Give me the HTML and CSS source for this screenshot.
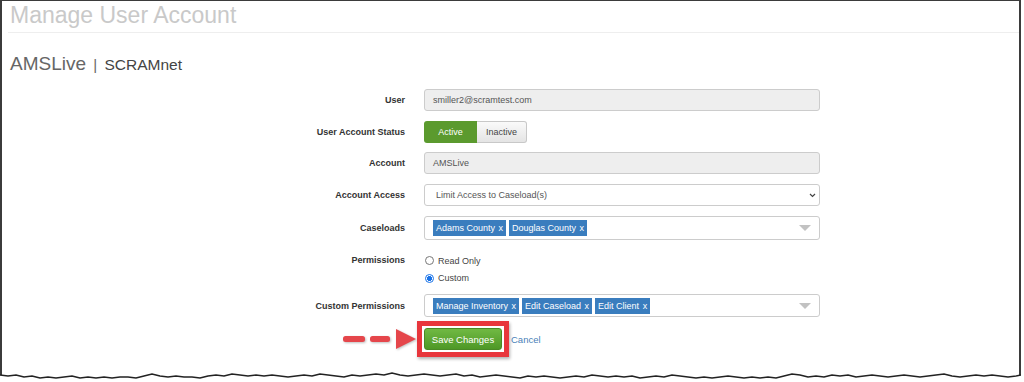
FILE: index.html
```html
<!DOCTYPE html>
<html lang="en">
<head>
  <meta charset="UTF-8" />
  <title>Manage User Account</title>
  <link rel="stylesheet" href="styles.css">
</head>
<body>

  <div class="frame">
    <h1 class="page-title">Manage User Account</h1>
    <h2 class="account-name">AMSLive <span class="sep">|</span> <span class="org">SCRAMnet</span></h2>

    <form class="user-form">
      <div class="field">
        <label>User</label>
        <div class="input readonly">smiller2@scramtest.com</div>
      </div>

      <div class="field status-row">
        <label>User Account Status</label>
        <div class="toggle">
          <span class="toggle-on">Active</span><span class="toggle-off">Inactive</span>
        </div>
      </div>

      <div class="field">
        <label>Account</label>
        <div class="input readonly">AMSLive</div>
      </div>

      <div class="field">
        <label>Account Access</label>
        <div class="input select">
          <span>Limit Access to Caseload(s)</span>
          <svg class="chevron" width="7" height="5" viewBox="0 0 7 5"><polyline points="1,1 3.5,3.5 6,1" fill="none" stroke="#444" stroke-width="1.2"/></svg>
        </div>
      </div>

      <div class="field caseload-row">
        <label>Caseloads</label>
        <div class="input tags">
          <span class="tag">Adams County <b>x</b></span>
          <span class="tag">Douglas County <b>x</b></span>
          <span class="caret"></span>
        </div>
      </div>

      <div class="field perm-row">
        <label>Permissions</label>
        <div class="radio-list">
          <div class="radio"><span class="dot"></span>Read Only</div>
          <div class="radio"><span class="dot checked"></span>Custom</div>
        </div>
      </div>

      <div class="field custom-row">
        <label>Custom Permissions</label>
        <div class="input tags short">
          <span class="tag">Manage Inventory <b>x</b></span>
          <span class="tag">Edit Caseload <b>x</b></span>
          <span class="tag">Edit Client <b>x</b></span>
          <span class="caret"></span>
        </div>
      </div>

      <div class="field actions">
        <div class="pointer">
          <svg width="73" height="22" viewBox="0 0 73 22">
            <rect x="0" y="8" width="22" height="6" rx="2.5" fill="#e5464b"/>
            <rect x="27" y="8" width="20" height="6" rx="2.5" fill="#e5464b"/>
            <polygon points="53,1 73,11 53,21" fill="#e5464b"/>
          </svg>
        </div>
        <div class="buttons">
          <span class="callout"><button type="button" class="save">Save Changes</button></span>
          <a href="#" class="cancel">Cancel</a>
        </div>
      </div>
    </form>

    <svg class="torn" width="1021" height="14" viewBox="0 0 1021 14">
      <polygon fill="#fff" points="0,6 8,7 16,6 24,8 32,7 40,9 48,8 56,9 64,8 72,7 80,9 88,8 96,9 104,8 112,9 120,8 128,8 136,9 144,7 152,5 160,7 168,8 176,7 184,8 192,8 200,9 208,7 216,6 224,7 232,5 240,6 248,7 256,6 264,7 272,6 280,7 288,8 296,7 304,6 312,7 320,5 328,6 336,7 344,8 352,6 360,7 368,6 376,5 384,6 392,4 400,6 408,7 416,6 424,5 432,6 440,7 448,6 456,5 464,7 472,6 480,8 488,7 496,6 504,7 512,8 520,9 528,7 536,8 544,7 552,8 560,9 568,8 576,7 584,8 592,6 600,7 608,8 616,7 624,8 632,7 640,9 648,8 656,7 664,8 672,6 680,7 688,8 696,9 704,8 712,9 720,8 728,7 736,8 744,9 752,8 760,9 768,8 776,9 784,7 792,5 800,6 808,8 816,7 824,8 832,6 840,7 848,6 856,8 864,7 872,6 880,7 888,8 896,7 904,6 912,7 920,8 928,7 936,6 944,5 952,7 960,8 968,7 976,6 984,7 992,6 1000,7 1008,8 1016,7 1021,6 1021,14 0,14"/>
      <polyline fill="none" stroke="#222" stroke-width="1.3" points="0,6 8,7 16,6 24,8 32,7 40,9 48,8 56,9 64,8 72,7 80,9 88,8 96,9 104,8 112,9 120,8 128,8 136,9 144,7 152,5 160,7 168,8 176,7 184,8 192,8 200,9 208,7 216,6 224,7 232,5 240,6 248,7 256,6 264,7 272,6 280,7 288,8 296,7 304,6 312,7 320,5 328,6 336,7 344,8 352,6 360,7 368,6 376,5 384,6 392,4 400,6 408,7 416,6 424,5 432,6 440,7 448,6 456,5 464,7 472,6 480,8 488,7 496,6 504,7 512,8 520,9 528,7 536,8 544,7 552,8 560,9 568,8 576,7 584,8 592,6 600,7 608,8 616,7 624,8 632,7 640,9 648,8 656,7 664,8 672,6 680,7 688,8 696,9 704,8 712,9 720,8 728,7 736,8 744,9 752,8 760,9 768,8 776,9 784,7 792,5 800,6 808,8 816,7 824,8 832,6 840,7 848,6 856,8 864,7 872,6 880,7 888,8 896,7 904,6 912,7 920,8 928,7 936,6 944,5 952,7 960,8 968,7 976,6 984,7 992,6 1000,7 1008,8 1016,7 1021,6"/>
    </svg>
  </div>

</body>
</html>
```

FILE: styles.css
```css
body {
  margin: 0;
  font-family: "Liberation Sans", Arial, sans-serif;
  background: #fff;
  color: #333;
}

.frame {
  width: 1017px;
  border: 2px solid #3b3b3b;
  border-top-width: 1px;
  border-bottom: 0;
}

.page-title {
  margin: 0 0 0 6px;
  padding: 0 0 3px 2px;
  font-size: 23px;
  line-height: 28px;
  font-weight: normal;
  color: #c9c9c9;
  border-bottom: 1px solid #eee;
}

.account-name {
  margin: 19px 0 0 8px;
  font-size: 19px;
  line-height: 24px;
  font-weight: normal;
  color: #666;
}
.account-name .sep {
  font-size: 15px;
  margin: 0 2px;
}
.account-name .org {
  font-size: 15.5px;
  color: #444;
}

.user-form {
  margin-top: 12px;
}

.field {
  display: grid;
  grid-template-columns: 403px 396px;
  column-gap: 19px;
  align-items: center;
  margin-bottom: 10px;
}
.field label {
  text-align: right;
  font-size: 9px;
  font-weight: bold;
  color: #333;
}
.status-row { margin-bottom: 9px; }
.caseload-row { margin-bottom: 12px; }
.perm-row {
  align-items: start;
  margin-bottom: 7px;
}
.perm-row label { line-height: 17px; }
.custom-row { margin-bottom: 4px; }

.input {
  box-sizing: border-box;
  height: 22px;
  border: 1px solid #ccc;
  border-radius: 3px;
  padding: 0 8px;
  font-size: 9px;
  line-height: 20px;
  color: #555;
}
.readonly { background: #eee; }

.select {
  display: flex;
  align-items: center;
  justify-content: space-between;
  padding: 0 3px 0 11px;
}

.toggle {
  display: flex;
  font-size: 9px;
}
.toggle span {
  box-sizing: border-box;
  height: 22px;
  line-height: 22px;
  text-align: center;
}
.toggle-on {
  width: 53px;
  background: #5b9a2e;
  color: #fff;
  border-radius: 3px 0 0 3px;
}
.toggle-off {
  width: 50px;
  background: linear-gradient(#fafafa, #e4e4e4);
  border: 1px solid #c8c8c8;
  border-left: 0;
  border-radius: 0 3px 3px 0;
  color: #444;
  line-height: 20px !important;
}

.tags {
  display: flex;
  align-items: center;
  gap: 3px;
  height: 24px;
  background: #fff;
}
.tags.short { height: 23px; }
.tag {
  background: #3a7dbe;
  color: #fff;
  font-size: 9px;
  line-height: 16px;
  padding: 0 3px;
}
.tag b {
  font-weight: normal;
  margin-left: 1px;
}
.caret {
  margin-left: auto;
  width: 0;
  height: 0;
  border-left: 6px solid transparent;
  border-right: 6px solid transparent;
  border-top: 6px solid #c2c2c2;
}

.radio-list {
  display: flex;
  flex-direction: column;
}
.radio {
  display: flex;
  align-items: center;
  height: 17.5px;
  font-size: 9px;
  color: #444;
}
.dot {
  box-sizing: border-box;
  width: 9px;
  height: 9px;
  margin: 0 4px 0 1px;
  border: 1px solid #777;
  border-radius: 50%;
  background: #fff;
}
.dot.checked {
  border-color: #1a73e8;
  background: radial-gradient(circle, #1a73e8 0 2.3px, #fff 2.8px);
}

.actions {
  margin-bottom: 0;
}
.pointer {
  display: flex;
  justify-content: flex-end;
  margin-right: -11px;
}
.pointer svg {
  display: block;
  filter: drop-shadow(1px 1px 1px rgba(0, 0, 0, 0.25));
}
.buttons {
  display: flex;
  align-items: center;
}
.callout {
  display: inline-block;
  margin-left: -7px;
  padding: 2px;
  border: 5px solid #e8363c;
  box-shadow: 1px 2px 3px rgba(0, 0, 0, 0.3);
}
.save {
  display: block;
  width: 78px;
  height: 22px;
  padding: 0;
  font-family: inherit;
  font-size: 9.5px;
  color: #fff;
  background: linear-gradient(#70b943, #4e9826);
  border: 1px solid #4a8a25;
  border-radius: 3px;
}
.cancel {
  margin-left: 2px;
  font-size: 9.5px;
  color: #4a7fb8;
  text-decoration: none;
}

.torn {
  display: block;
  margin: 12px 0 0 -2px;
}
```
